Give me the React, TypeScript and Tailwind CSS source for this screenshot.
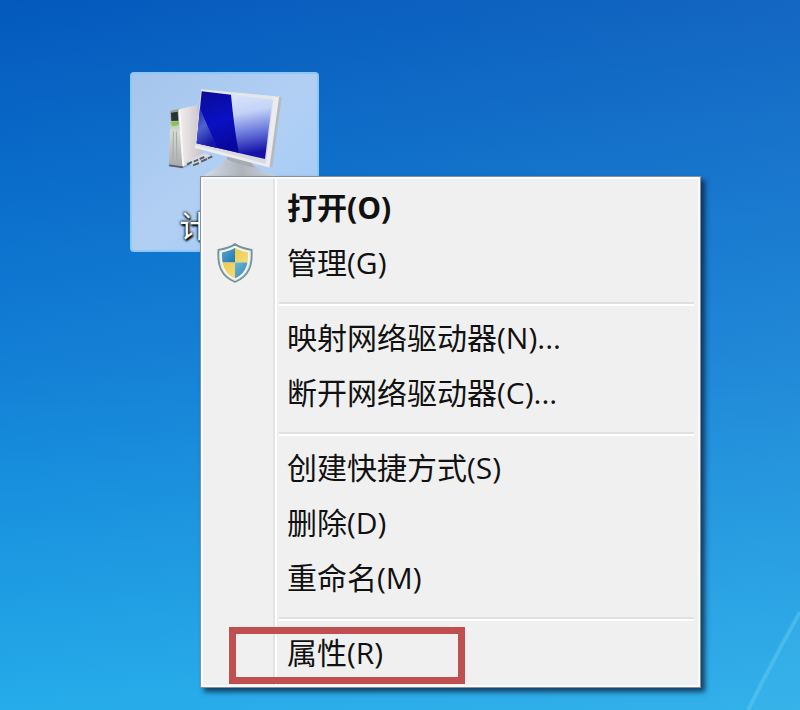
import clsx from "clsx";

type MenuItem = {
  text: string;
  bold?: boolean;
  shield?: boolean;
  marked?: boolean;
};

const groups: MenuItem[][] = [
  [
    { text: "打开(O)", bold: true },
    { text: "管理(G)", shield: true },
  ],
  [{ text: "映射网络驱动器(N)..." }, { text: "断开网络驱动器(C)..." }],
  [{ text: "创建快捷方式(S)" }, { text: "删除(D)" }, { text: "重命名(M)" }],
  [{ text: "属性(R)", marked: true }],
];

function ComputerIcon() {
  return (
    <svg viewBox="130 80 360 270" className="h-[90px] w-[120px]" aria-hidden="true">
      <defs>
        <linearGradient id="glass" x1="0.1" y1="0" x2="0.3" y2="1">
          <stop offset="0" stopColor="#e3edfb" />
          <stop offset="0.4" stopColor="#c3d2f7" />
          <stop offset="0.7" stopColor="#6a78dc" />
          <stop offset="1" stopColor="#1512a8" />
        </linearGradient>
        <linearGradient id="deep" x1="0" y1="0" x2="0.3" y2="1">
          <stop offset="0" stopColor="#0a0a94" />
          <stop offset="0.6" stopColor="#0a10c4" />
          <stop offset="1" stopColor="#0808a0" />
        </linearGradient>
        <linearGradient id="sheen" x1="0" y1="0" x2="0.4" y2="1">
          <stop offset="0" stopColor="#1a25b0" />
          <stop offset="0.5" stopColor="#5263cc" />
          <stop offset="1" stopColor="#1217a8" />
        </linearGradient>
        <linearGradient id="tower" x1="0" y1="0" x2="1" y2="0">
          <stop offset="0" stopColor="#f3eeee" />
          <stop offset="1" stopColor="#c9c2ca" />
        </linearGradient>
        <linearGradient id="front" x1="0" y1="0" x2="0" y2="1">
          <stop offset="0" stopColor="#8d9a8e" />
          <stop offset="0.4" stopColor="#d7ddd5" />
          <stop offset="1" stopColor="#a9a9ae" />
        </linearGradient>
        <linearGradient id="stand" x1="0" y1="0" x2="1" y2="0">
          <stop offset="0" stopColor="#d3dce8" />
          <stop offset="0.5" stopColor="#aeb4bb" />
          <stop offset="1" stopColor="#cdd6e2" />
        </linearGradient>
      </defs>
      <path d="M148 318 L184 326 L272 293 L268 284 L182 306Z" fill="#74869e" opacity="0.55" />
      <path d="M172 150 L226 137 L242 290 L184 322Z" fill="url(#tower)" />
      <path d="M146 154 L174 148 L188 322 L142 318Z" fill="url(#front)" />
      <path d="M173 150 L185 320" stroke="#faf7f7" strokeWidth="6" />
      <path d="M148 160 L168 157 L170 184 L149 185Z" fill="#283431" />
      <path d="M149 188 L171 186 L172 197 L151 201Z" fill="#7fc653" />
      <path d="M155 216 L154 300 M164 216 L166 304" stroke="#a4aba4" strokeWidth="3" />
      <path d="M142 318 L184 324" stroke="#5a5a60" strokeWidth="5" />
      <path d="M186 307 L250 282 L276 291 L216 320Z" fill="#d9dce2" />
      <path
        d="M196 315 l15 -7 M216 307 l14 -6 M234 299 l14 -6 M214 318 l18 -7 M238 307 l18 -8 M258 297 l14 -6"
        stroke="#53616e"
        strokeWidth="6"
      />
      <path d="M316 292 C310 318 274 326 246 350 L474 350 C440 344 404 330 386 306Z" fill="url(#stand)" />
      <path d="M316 290 L384 308 L400 324 C370 320 340 312 316 300Z" fill="#a4abb1" />
      <path d="M238 92 L476 112 L450 324 L220 263Z" fill="#d9dadf" />
      <path d="M238 90 L476 112 L472 124 L238 98Z" fill="#e4e6ec" />
      <path d="M460 111 L480 114 L452 326 L434 320Z" fill="#b5bbc0" />
      <path d="M456 111 L472 113 L444 321 L432 318Z" fill="#ececee" />
      <path d="M220 256 L434 314 L448 326 L219 266Z" fill="#ecebed" />
      <path d="M240 96 L452 121 L430 299 L225 252Z" fill="url(#glass)" />
      <path d="M240 96 L328 106 C334 170 342 230 352 280 L225 252Z" fill="url(#deep)" />
      <path d="M235 145 C252 190 270 226 288 266 L225 252Z" fill="url(#sheen)" />
    </svg>
  );
}

function ShieldIcon() {
  const outline = "M18 1 C23 5 29 6 35 7 C36 22 33 34 18 40 C3 34 0 22 1 7 C7 6 13 5 18 1Z";
  const inner = "M18 4 C22 7 27 8 32 9 C33 22 30 32 18 37 C6 32 3 22 4 9 C9 8 14 7 18 4Z";
  return (
    <svg viewBox="0 0 36 41" className="h-10 w-9" aria-hidden="true">
      <defs>
        <clipPath id="shield">
          <path d={inner} />
        </clipPath>
        <linearGradient id="blue" x1="0" y1="0" x2="1" y2="1">
          <stop offset="0" stopColor="#6db6d2" />
          <stop offset="1" stopColor="#1f76b6" />
        </linearGradient>
        <linearGradient id="gold" x1="0" y1="0" x2="1" y2="1">
          <stop offset="0" stopColor="#efc93f" />
          <stop offset="1" stopColor="#f3dc85" />
        </linearGradient>
      </defs>
      <path d={outline} fill="#dbe8e6" stroke="#76919a" strokeWidth="1.8" />
      <g clipPath="url(#shield)">
        <rect width="18" height="20" fill="url(#blue)" />
        <rect x="18" width="18" height="20" fill="url(#gold)" />
        <rect y="20" width="18" height="21" fill="url(#gold)" />
        <rect x="18" y="20" width="18" height="21" fill="url(#blue)" />
      </g>
      <path d={inner} fill="none" stroke="#f4f8ee" strokeWidth="1.6" />
    </svg>
  );
}

function DesktopIcon() {
  return (
    <button className="relative flex h-[180px] w-[189px] flex-col items-center rounded border-2 border-[#8fc6f8] bg-linear-to-br from-[#a4c5ec] via-[#b1cff3] to-[#9fcbf8] pt-3">
      <ComputerIcon />
      <span className="mt-8 text-3xl leading-9 text-white [text-shadow:1px_2px_2px_#000,0_0_3px_#000,0_0_3px_#222]">
        计算机
      </span>
    </button>
  );
}

function Row({ item }: { item: MenuItem }) {
  return (
    <li className="relative">
      <button
        className={clsx(
          "flex h-[55px] w-full items-center text-left text-[30px] text-[#111]",
          item.bold && "font-bold",
        )}
      >
        <span className="flex w-[84px] shrink-0 pl-[14px]">{item.shield && <ShieldIcon />}</span>
        {item.text}
      </button>
      {item.marked && (
        <span className="pointer-events-none absolute top-0.5 left-[26px] h-[57px] w-[236px] border-[7px] border-[#c0504f]" />
      )}
    </li>
  );
}

function ContextMenu() {
  return (
    <nav className="absolute top-[176px] left-[200px] w-[501px] border border-[#85929c] bg-[#f0f0f0] shadow-[4px_4px_5px_rgba(10,30,60,0.75)]">
      <div className="relative border-2 border-[#fafafa] pt-px pb-[5px]">
        <div className="absolute inset-y-0 left-[70px] w-1 border-l-2 border-[#e3e3e3] bg-white" />
        {groups.map((group, i) => (
          <div key={i}>
            {i > 0 && (
              <div className="mt-3 mr-1 mb-1 ml-[76px] h-1 border-t-2 border-[#e0e0e0] bg-white" />
            )}
            <ul>
              {group.map((item) => (
                <Row key={item.text} item={item} />
              ))}
            </ul>
          </div>
        ))}
      </div>
    </nav>
  );
}

export default function App() {
  return (
    <main className="relative min-h-screen overflow-hidden bg-linear-to-b from-[#0459bd] via-[#0b79d4] to-[#18a6ea] pt-[72px] pl-[130px] font-['Open_Sans','Noto_Sans_CJK_SC',sans-serif]">
      <div className="absolute inset-0 bg-linear-to-br from-transparent to-[#a0dce8]/20" />
      <svg viewBox="0 0 60 130" className="absolute right-0 bottom-0 h-[130px] w-[60px]" aria-hidden="true">
        <path d="M60 32 Q34 78 8 130 L60 130Z" fill="#5cc4f2" opacity="0.12" />
        <path d="M60 32 Q34 78 8 130" fill="none" stroke="#6fd0f5" strokeWidth="4" opacity="0.4" />
      </svg>
      <DesktopIcon />
      <ContextMenu />
    </main>
  );
}
